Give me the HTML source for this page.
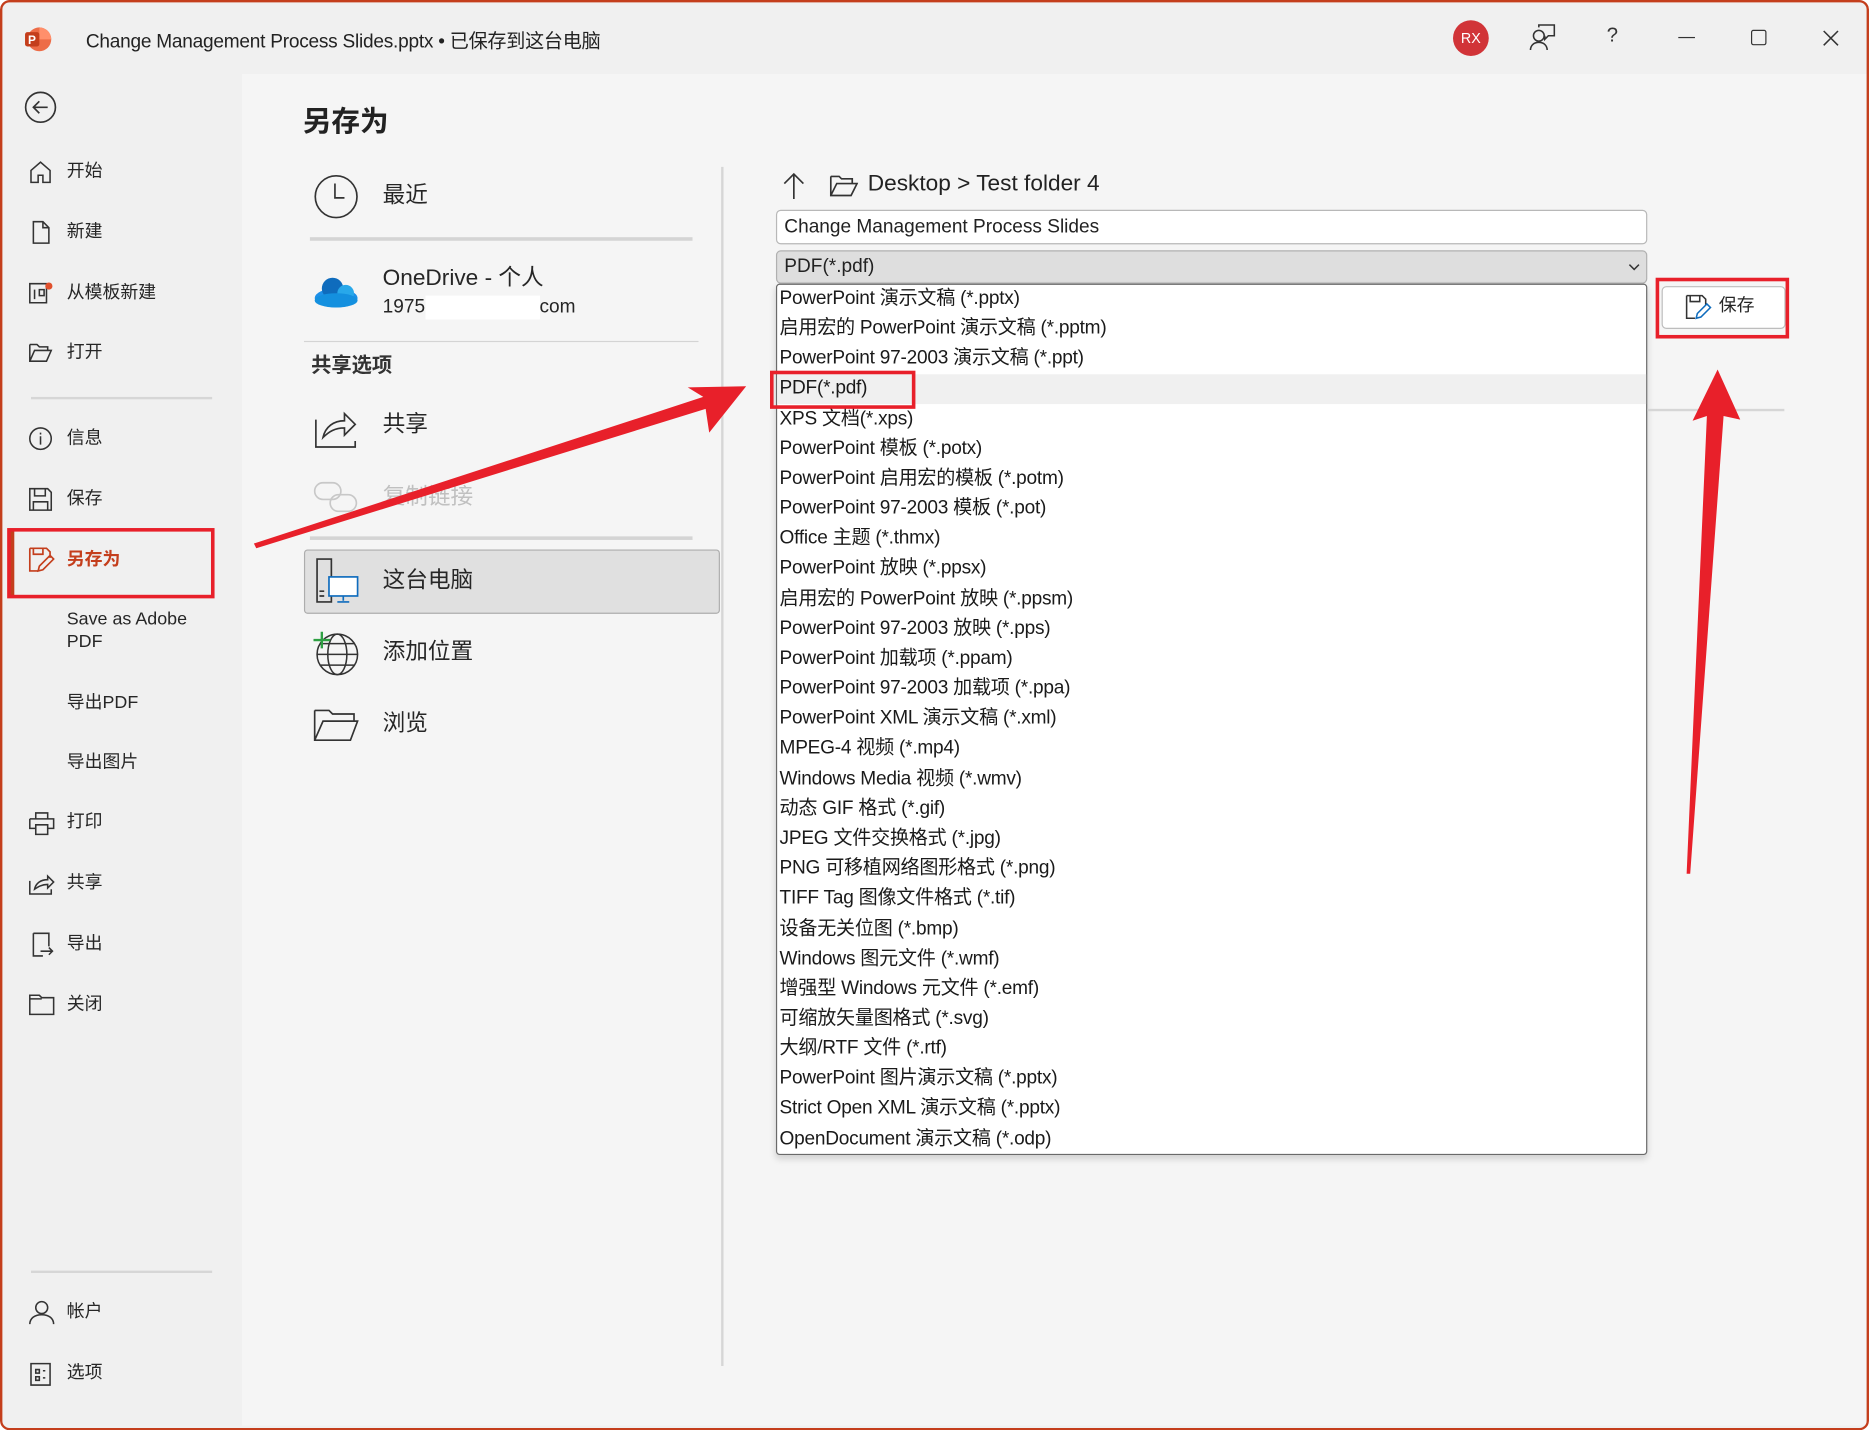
<!DOCTYPE html>
<html><head><meta charset="utf-8"><style>
*{margin:0;padding:0;box-sizing:border-box}
html,body{width:1869px;height:1430px;overflow:hidden;background:#fff}
#w{position:absolute;left:0;top:0;width:1568px;height:1200px;transform:scale(1.19196);transform-origin:0 0;font-family:"Liberation Sans","Noto Sans CJK SC",sans-serif;color:#262626;background:#f0f0f0;border-radius:8px;overflow:hidden}
.a{position:absolute;white-space:nowrap}
.nav{font-size:15px;line-height:20px}
.ic{position:absolute}
.mid{font-size:19px;line-height:24px}
.li{position:absolute;left:654px;font-size:16px;line-height:20px;color:#1a1a1a;letter-spacing:-0.2px}
</style></head><body><div id="w">
<svg class="ic" style="left:20px;top:21px" width="24" height="24" viewBox="0 0 24 24"><circle cx="13" cy="12" r="10" fill="#ed6c47"/><path d="M13 2a10 10 0 0 1 10 10H13z" fill="#ff8f6b"/><rect x="1" y="6" width="12" height="12" rx="2" fill="#c43e1c"/><text x="3.5" y="16" font-size="10" fill="#fff" font-family="Liberation Sans" font-weight="bold">P</text></svg>
<div class="a" style="left:72px;top:21px;font-size:16px;color:#222;letter-spacing:-0.2px">Change Management Process Slides.pptx • 已保存到这台电脑</div>
<div class="a" style="left:1219px;top:17px;width:30px;height:30px;border-radius:50%;background:#d13438;color:#fff;font-size:12px;line-height:30px;text-align:center">RX</div>
<svg class="ic" style="left:1282px;top:20px" width="26" height="24" viewBox="0 0 26 24" fill="none" stroke="#333" stroke-width="1.3"><circle cx="9" cy="10" r="4.5"/><path d="M2 22c0-4 3-6.5 7-6.5s7 2.5 7 6.5"/><path d="M9 3V1h13v9h-5l-3 3v-3"/></svg>
<div class="a" style="left:1348px;top:20px;font-size:17px;color:#333">?</div>
<div class="a" style="left:1408px;top:31px;width:14px;height:1.3px;background:#333"></div>
<div class="a" style="left:1469px;top:25px;width:13px;height:13px;border:1.3px solid #333;border-radius:2px"></div>
<svg class="ic" style="left:1529px;top:25px" width="14" height="14" viewBox="0 0 14 14" stroke="#333" stroke-width="1.3"><path d="M1 1l12 12M13 1L1 13"/></svg>
<svg class="ic" style="left:20px;top:76px" width="28" height="28" viewBox="0 0 28 28" fill="none" stroke="#333" stroke-width="1.4"><circle cx="14" cy="14" r="12.5"/><path d="M20 14H8M13 9l-5 5 5 5"/></svg>
<div class="nav">
<svg class="ic" style="left:24px;top:134px" width="20" height="20" viewBox="0 0 20 20" fill="none" stroke="#333" stroke-width="1.3"><path d="M2 9L10 2l8 7v10h-6v-6H8v6H2z"/></svg><div class="a" style="left:56px;top:134px">开始</div>
<svg class="ic" style="left:24px;top:185px" width="20" height="20" viewBox="0 0 20 20" fill="none" stroke="#333" stroke-width="1.3"><path d="M4 1h8l5 5v13H4zM12 1v5h5"/></svg><div class="a" style="left:56px;top:185px">新建</div>
<svg class="ic" style="left:24px;top:236px" width="22" height="20" viewBox="0 0 22 20" fill="none" stroke="#333" stroke-width="1.3"><path d="M1 2h14v16H1zM5 7v8M9 7h4v5H9z"/><circle cx="17" cy="4" r="3" fill="#e0502c" stroke="none"/></svg><div class="a" style="left:56px;top:236px">从模板新建</div>
<svg class="ic" style="left:24px;top:287px" width="20" height="18" viewBox="0 0 20 18" fill="none" stroke="#333" stroke-width="1.3"><path d="M1 2h6l2 2h7v3M1 2v14h14l4-9H5L1 16"/></svg><div class="a" style="left:56px;top:286px">打开</div>
<div class="a" style="left:26px;top:333px;width:152px;height:2px;background:#d6d6d6"></div>
<svg class="ic" style="left:24px;top:358px" width="20" height="20" viewBox="0 0 20 20" fill="none" stroke="#333" stroke-width="1.3"><circle cx="10" cy="10" r="9"/><path d="M10 8v7M10 5v1.5"/></svg><div class="a" style="left:56px;top:358px">信息</div>
<svg class="ic" style="left:24px;top:409px" width="20" height="20" viewBox="0 0 20 20" fill="none" stroke="#333" stroke-width="1.3"><path d="M1 1h15l3 3v15H1zM5 1v6h9V1M4 19v-7h12v7"/></svg><div class="a" style="left:56px;top:409px">保存</div>
<div class="a" style="left:8px;top:444px;width:4px;height:56px;background:#c43e1c"></div>
<svg class="ic" style="left:24px;top:459px" width="22" height="22" viewBox="0 0 22 22" fill="none" stroke="#c43e1c" stroke-width="1.4"><path d="M1 1h14l3 3v5M1 1v19h7M4 1v5h8V1M8 20l1-4 9-9 3 3-9 9z"/></svg><div class="a" style="left:56px;top:460px;color:#c43e1c;font-weight:bold">另存为</div>
<div class="a" style="left:6px;top:443px;width:174px;height:59px;border:3px solid #e8202a"></div>
<div class="a" style="left:56px;top:510px;line-height:19px">Save as Adobe<br>PDF</div>
<div class="a" style="left:56px;top:580px">导出PDF</div>
<div class="a" style="left:56px;top:630px">导出图片</div>
<svg class="ic" style="left:24px;top:681px" width="22" height="20" viewBox="0 0 22 20" fill="none" stroke="#333" stroke-width="1.3"><path d="M6 6V1h10v5M1 6h20v8h-5M1 6v8h5M6 11h10v8H6z"/></svg><div class="a" style="left:56px;top:680px">打印</div>
<svg class="ic" style="left:24px;top:731px" width="22" height="20" viewBox="0 0 22 20" fill="none" stroke="#333" stroke-width="1.3"><path d="M1 8v11h18v-4M5 15c1-5 5-8 11-8V4l5 5-5 5v-3c-5 0-8 2-11 4z"/></svg><div class="a" style="left:56px;top:731px">共享</div>
<svg class="ic" style="left:24px;top:782px" width="22" height="22" viewBox="0 0 22 22" fill="none" stroke="#333" stroke-width="1.3"><path d="M4 1h13v11M4 1v19h8M10 16h10M17 13l3 3-3 3"/></svg><div class="a" style="left:56px;top:782px">导出</div>
<svg class="ic" style="left:24px;top:834px" width="22" height="18" viewBox="0 0 22 18" fill="none" stroke="#333" stroke-width="1.3"><path d="M1 1h8l2 2h10v14H1zM1 4h10"/></svg><div class="a" style="left:56px;top:833px">关闭</div>
<div class="a" style="left:26px;top:1066px;width:152px;height:2px;background:#d6d6d6"></div>
<svg class="ic" style="left:24px;top:1091px" width="22" height="20" viewBox="0 0 22 20" fill="none" stroke="#333" stroke-width="1.3"><circle cx="11" cy="6" r="5"/><path d="M1 20c0-5 4-8 10-8s10 3 10 8"/></svg><div class="a" style="left:56px;top:1091px">帐户</div>
<svg class="ic" style="left:25px;top:1143px" width="18" height="20" viewBox="0 0 18 20" fill="none" stroke="#333" stroke-width="1.3"><path d="M1 1h16v18H1zM5 6h3v3H5zM5 12h3v3H5zM11 7h2M11 13h2"/></svg><div class="a" style="left:56px;top:1142px">选项</div>
</div>
<div class="a" style="left:203px;top:62px;width:1365px;height:1134px;background:#f5f5f5"></div>
<div class="a" style="left:254px;top:82px;font-size:24px;font-weight:bold;color:#222">另存为</div>
<div class="mid">
<svg class="ic" style="left:263px;top:146px" width="38" height="38" viewBox="0 0 38 38" fill="none" stroke="#333" stroke-width="1.4"><circle cx="19" cy="19" r="17.5"/><path d="M18 8v12h8"/></svg>
<div class="a" style="left:321px;top:153px">最近</div>
<div class="a" style="left:260px;top:199px;width:321px;height:3px;background:#d4d4d4"></div>
<svg class="ic" style="left:262px;top:230px" width="40" height="30" viewBox="0 0 40 30"><ellipse cx="20" cy="20" rx="18" ry="8" fill="#1e90e8"/><circle cx="17" cy="12" r="9" fill="#0f6cbd"/><circle cx="28" cy="16" r="7" fill="#28a8ea"/><ellipse cx="20" cy="22" rx="18" ry="6" fill="#1490df"/></svg>
<div class="a" style="left:321px;top:222px">OneDrive - 个人</div>
<div class="a" style="left:321px;top:248px;font-size:16px;line-height:20px">1975<span style="display:inline-block;width:96px;height:20px;background:#fff;vertical-align:top"></span>com</div>
<div class="a" style="left:255px;top:286px;width:331px;height:1px;background:#d4d4d4"></div>
<div class="a" style="left:261px;top:295px;font-size:17px;font-weight:bold;color:#333">共享选项</div>
<svg class="ic" style="left:263px;top:339px" width="38" height="38" viewBox="0 0 38 38" fill="none" stroke="#333" stroke-width="1.4"><path d="M2 13v23h33v-5M8 28c2-9 9-14 18-14V8l9 9-9 9v-6c-8 0-13 3-18 8z"/></svg>
<div class="a" style="left:321px;top:345px">共享</div>
<svg class="ic" style="left:263px;top:403px" width="38" height="30" viewBox="0 0 38 30" fill="none" stroke="#c8c8c8" stroke-width="1.4"><rect x="1" y="2" width="22" height="14" rx="7"/><rect x="14" y="12" width="22" height="14" rx="7"/></svg>
<div class="a" style="left:321px;top:406px;color:#c0c0c0">复制链接</div>
<div class="a" style="left:260px;top:450px;width:321px;height:3px;background:#d4d4d4"></div>
<div class="a" style="left:255px;top:461px;width:349px;height:54px;background:#e0e0e0;border:1px solid #adadad;border-radius:3px"></div>
<svg class="ic" style="left:264px;top:468px" width="38" height="38" viewBox="0 0 38 38" fill="none" stroke-width="1.4"><path d="M2 1h12v36H2zM4 28h4M4 32h4" stroke="#333"/><rect x="12" y="16" width="24" height="16" fill="#fff" stroke="#0f6cbd"/><path d="M24 32v4M19 37h10" stroke="#0f6cbd"/></svg>
<div class="a" style="left:321px;top:476px">这台电脑</div>
<svg class="ic" style="left:262px;top:528px" width="40" height="40" viewBox="0 0 40 40" fill="none" stroke="#333" stroke-width="1.3"><circle cx="21" cy="21" r="17"/><ellipse cx="21" cy="21" rx="8" ry="17"/><path d="M4 21h34M7 12h28M7 30h28"/><path d="M8 2v14M1 9h14" stroke="#2ea043" stroke-width="2"/></svg>
<div class="a" style="left:321px;top:536px">添加位置</div>
<svg class="ic" style="left:263px;top:593px" width="38" height="30" viewBox="0 0 38 30" fill="none" stroke="#333" stroke-width="1.4"><path d="M1 3h12l3 3h18v6M1 3v25h30l6-16H8L1 28"/></svg>
<div class="a" style="left:321px;top:596px">浏览</div>
</div>
<div class="a" style="left:605px;top:140px;width:2px;height:1006px;background:#d6d6d6"></div>
<svg class="ic" style="left:656px;top:144px" width="20" height="24" viewBox="0 0 20 24" fill="none" stroke="#333" stroke-width="1.4"><path d="M10 23V2M2 10l8-8 8 8"/></svg>
<svg class="ic" style="left:696px;top:146px" width="24" height="20" viewBox="0 0 24 20" fill="none" stroke="#333" stroke-width="1.4"><path d="M1 2h7l2 2h9v4M1 2v16h17l5-10H6L1 18"/></svg>
<div class="a" style="left:728px;top:144px;font-size:19px;color:#222">Desktop &gt; Test folder 4</div>
<div class="a" style="left:651px;top:176px;width:731px;height:29px;background:#fff;border:1px solid #b8b8b8;border-radius:4px;font-size:16px;line-height:27px;padding-left:6px;color:#222">Change Management Process Slides</div>
<div class="a" style="left:651px;top:210px;width:731px;height:28px;background:#dedede;border:1px solid #b0b0b0;border-radius:4px;font-size:16px;line-height:26px;padding-left:6px;color:#222">PDF(*.pdf)</div>
<svg class="ic" style="left:1366px;top:220px" width="10" height="8" viewBox="0 0 10 8" fill="none" stroke="#333" stroke-width="1.3"><path d="M1 2l4 4 4-4"/></svg>
<div class="a" style="left:651px;top:238px;width:731px;height:731px;background:#fff;border:1px solid #6a6a6a;border-radius:3px;box-shadow:0 3px 6px rgba(0,0,0,.15)"></div>
<div class="a" style="left:652px;top:314px;width:729px;height:25px;background:#f0f0f0"></div>
<div class="li" style="top:241px">PowerPoint 演示文稿 (*.pptx)</div>
<div class="li" style="top:266px">启用宏的 PowerPoint 演示文稿 (*.pptm)</div>
<div class="li" style="top:291px">PowerPoint 97-2003 演示文稿 (*.ppt)</div>
<div class="li" style="top:316px">PDF(*.pdf)</div>
<div class="li" style="top:342px">XPS 文档(*.xps)</div>
<div class="li" style="top:367px">PowerPoint 模板 (*.potx)</div>
<div class="li" style="top:392px">PowerPoint 启用宏的模板 (*.potm)</div>
<div class="li" style="top:417px">PowerPoint 97-2003 模板 (*.pot)</div>
<div class="li" style="top:442px">Office 主题 (*.thmx)</div>
<div class="li" style="top:467px">PowerPoint 放映 (*.ppsx)</div>
<div class="li" style="top:493px">启用宏的 PowerPoint 放映 (*.ppsm)</div>
<div class="li" style="top:518px">PowerPoint 97-2003 放映 (*.pps)</div>
<div class="li" style="top:543px">PowerPoint 加载项 (*.ppam)</div>
<div class="li" style="top:568px">PowerPoint 97-2003 加载项 (*.ppa)</div>
<div class="li" style="top:593px">PowerPoint XML 演示文稿 (*.xml)</div>
<div class="li" style="top:618px">MPEG-4 视频 (*.mp4)</div>
<div class="li" style="top:644px">Windows Media 视频 (*.wmv)</div>
<div class="li" style="top:669px">动态 GIF 格式 (*.gif)</div>
<div class="li" style="top:694px">JPEG 文件交换格式 (*.jpg)</div>
<div class="li" style="top:719px">PNG 可移植网络图形格式 (*.png)</div>
<div class="li" style="top:744px">TIFF Tag 图像文件格式 (*.tif)</div>
<div class="li" style="top:770px">设备无关位图 (*.bmp)</div>
<div class="li" style="top:795px">Windows 图元文件 (*.wmf)</div>
<div class="li" style="top:820px">增强型 Windows 元文件 (*.emf)</div>
<div class="li" style="top:845px">可缩放矢量图格式 (*.svg)</div>
<div class="li" style="top:870px">大纲/RTF 文件 (*.rtf)</div>
<div class="li" style="top:895px">PowerPoint 图片演示文稿 (*.pptx)</div>
<div class="li" style="top:920px">Strict Open XML 演示文稿 (*.pptx)</div>
<div class="li" style="top:946px">OpenDocument 演示文稿 (*.odp)</div>
<div class="a" style="left:646px;top:311px;width:122px;height:32px;border:3px solid #e8202a"></div>
<div class="a" style="left:1394px;top:240px;width:104px;height:36px;background:#fff;border:1px solid #bdbdbd;border-radius:4px"></div>
<svg class="ic" style="left:1414px;top:247px" width="22" height="22" viewBox="0 0 22 22" fill="none" stroke-width="1.3"><path d="M1 1h13l3 3v5M1 1v19h7M4 1v5h8V1" stroke="#333"/><path d="M9 20l1-4 8-8 3 3-8 8z" stroke="#0f6cbd"/></svg>
<div class="a" style="left:1442px;top:247px;font-size:15px;line-height:20px">保存</div>
<div class="a" style="left:1389px;top:233px;width:112px;height:51px;border:3px solid #e8202a"></div>
<div class="a" style="left:1382px;top:343px;width:115px;height:2px;background:#d6d6d6"></div>
<svg class="ic" style="left:0;top:0" width="1568" height="1200" viewBox="0 0 1568 1200">
<polygon points="213,456 590,333 577,325 626,324 595,363 592,343 215,460" fill="#e8202a"/>
<polygon points="1415,733 1432,349 1420,353 1441,310 1460,352 1446,349 1418,733" fill="#e8202a"/>
</svg>
<div class="a" style="left:0;top:0;width:1568px;height:1200px;border:2px solid #c43e1c;border-radius:8px"></div>
</div></body></html>
